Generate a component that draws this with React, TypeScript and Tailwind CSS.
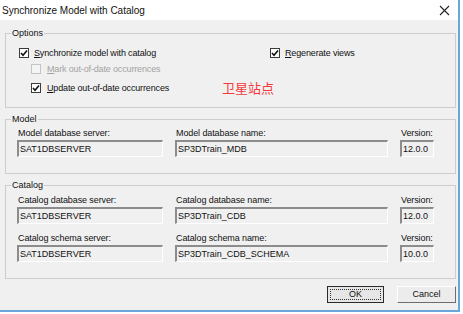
import React from "react";

const FONT = "font-['Liberation_Sans',Arial,sans-serif]";

function Check({ checked, disabled }: { checked?: boolean; disabled?: boolean }) {
  return (
    <span
      className={`flex h-[10px] w-[10px] shrink-0 items-center justify-center border ${
        disabled ? "border-[#c4c4c4] bg-[#f4f4f4]" : "border-[#3c3c3c] bg-white"
      }`}
    >
      {checked && (
        <svg width="8" height="8" viewBox="0 0 8 8">
          <path d="M1 4 L3 6.2 L7 1.5" fill="none" stroke="#111" strokeWidth="1.6" />
        </svg>
      )}
    </span>
  );
}

function Field({ label, value, width }: { label: string; value: string; width: string }) {
  return (
    <div className="flex flex-col">
      <div className="h-[11px] pl-[1px] text-[9px] leading-[11px] tracking-[-0.1px] text-[#111]">{label}</div>
      <div
        className={`${width} mt-[1px] h-[17px] border-t-2 border-l-2 border-b border-r border-t-[#8c8c8c] border-l-[#8c8c8c] border-b-white border-r-white bg-[#f0f0f0] pl-[1px] text-[9px] leading-[14px] text-[#111]`}
      >
        {value}
      </div>
    </div>
  );
}

function Group({ title, className, children }: { title: string; className: string; children: React.ReactNode }) {
  return (
    <fieldset className={`w-[451px] border border-[#cdcdcd] ${className}`}>
      <legend className="ml-[5px] h-[12px] px-[1px] text-[9px] leading-[12px] text-[#111]">{title}</legend>
      {children}
    </fieldset>
  );
}

export default function App() {
  return (
    <div className={`h-[314px] w-[463px] overflow-hidden bg-white ${FONT}`}>
      <div className="flex h-[312px] w-[460px] flex-col border-b-2 border-r-2 border-[#6aa5dc] bg-[#f0f0f0]">
        <div className="flex h-[20px] items-center justify-between bg-white pl-[2px] pr-[8px]">
          <span className="text-[10px] text-[#111]">Synchronize Model with Catalog</span>
          <svg width="11" height="11" viewBox="0 0 11 11">
            <path d="M1 1 L10 10 M10 1 L1 10" stroke="#222" strokeWidth="1.1" />
          </svg>
        </div>

        <div className="flex flex-col pl-[5px] pt-[7px]">
          <Group title="Options" className="h-[81px]">
            <div className="flex flex-col pl-[13px] pt-[8px] text-[9px] leading-[12px] tracking-[-0.15px] text-[#111]">
              <div className="flex h-[12px]">
                <div className="flex w-[251px] items-center gap-[5px]">
                  <Check checked />
                  <span>
                    <u>S</u>ynchronize model with catalog
                  </span>
                </div>
                <div className="flex items-center gap-[5px]">
                  <Check checked />
                  <span>
                    <u>R</u>egenerate views
                  </span>
                </div>
              </div>
              <div className="mt-[4px] flex h-[12px] items-center gap-[6px] pl-[12px] text-[#a3a3a3]">
                <Check disabled />
                <span>
                  <u>M</u>ark out-of-date occurrences
                </span>
              </div>
              <div className="mt-[7px] flex h-[12px] items-center pl-[12px]">
                <div className="flex w-[191px] items-center gap-[6px]">
                  <Check checked />
                  <span>
                    <u>U</u>pdate out-of-date occurrences
                  </span>
                </div>
                <span className="font-['Noto_Sans_CJK_SC',sans-serif] text-[13px] leading-[12px] tracking-normal text-[#f23a3a]">
                  卫星站点
                </span>
              </div>
            </div>
          </Group>

          <Group title="Model" className="mt-[5px] h-[61px]">
            <div className="flex gap-[12px] pl-[11px] pt-[3px]">
              <Field label="Model database server:" value="SAT1DBSERVER" width="w-[146px]" />
              <Field label="Model database name:" value="SP3DTrain_MDB" width="w-[213px]" />
              <Field label="Version:" value="12.0.0" width="w-[34px]" />
            </div>
          </Group>

          <Group title="Catalog" className="mt-[5px] h-[100px]">
            <div className="flex flex-col gap-[9px] pl-[11px] pt-[4px]">
              <div className="flex gap-[12px]">
                <Field label="Catalog database server:" value="SAT1DBSERVER" width="w-[146px]" />
                <Field label="Catalog database name:" value="SP3DTrain_CDB" width="w-[213px]" />
                <Field label="Version:" value="12.0.0" width="w-[34px]" />
              </div>
              <div className="flex gap-[12px]">
                <Field label="Catalog schema server:" value="SAT1DBSERVER" width="w-[146px]" />
                <Field label="Catalog schema name:" value="SP3DTrain_CDB_SCHEMA" width="w-[213px]" />
                <Field label="Version:" value="10.0.0" width="w-[34px]" />
              </div>
            </div>
          </Group>

          <div className="mt-[7px] flex w-[451px] justify-end gap-[13px] text-[9px] text-[#111]">
            <button className="flex h-[17px] w-[57px] items-center justify-center border border-[#2b2b2b] bg-[#e6e6e6] p-[2px]">
              <span className="flex h-full w-full items-center justify-center border border-dotted border-[#333]">OK</span>
            </button>
            <button className="flex h-[17px] w-[59px] items-center justify-center border border-t-white border-l-white border-b-[#6d6d6d] border-r-[#6d6d6d] bg-[#ececec]">
              Cancel
            </button>
          </div>
        </div>
      </div>
    </div>
  );
}
